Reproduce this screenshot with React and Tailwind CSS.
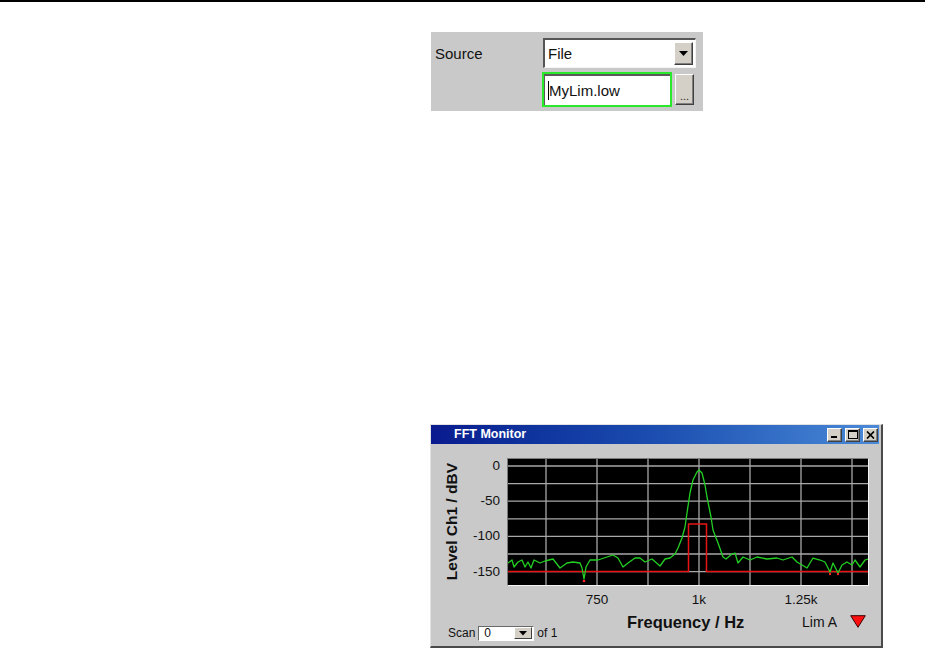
import React from "react";

const font = { fontFamily: '"Liberation Sans", Arial, sans-serif' };

const noise = [
  [508, 563], [512, 560], [514, 567], [518, 562], [522, 560], [525, 567], [528, 562], [531, 568], [534, 560],
  [540, 563], [545, 561], [553, 559], [560, 568], [567, 563], [573, 562], [580, 563], [582, 568], [584, 579],
  [586, 567], [590, 560], [598, 560], [607, 557], [613, 555], [618, 558], [623, 567], [628, 563], [635, 558],
  [640, 558], [645, 562], [652, 559], [660, 566], [665, 559], [670, 558], [675, 554], [678, 548], [682, 538],
  [685, 527], [687, 513], [690, 493], [693, 480], [697, 472], [699, 470], [702, 473], [705, 485], [707, 497],
  [711, 517], [713, 530], [718, 543], [723, 557], [726, 559], [732, 554], [735, 553], [738, 563], [743, 557],
  [750, 560], [757, 557], [767, 559], [777, 558], [783, 560], [792, 557], [797, 562], [802, 565], [807, 568],
  [813, 558], [820, 560], [825, 562], [830, 572], [833, 563], [838, 573], [842, 565], [847, 562], [852, 565],
  [855, 560], [860, 567], [865, 560], [868, 559],
];

const vLines = [546, 597, 648, 699, 750, 801, 852];
const hLines = [466, 483.6, 501.2, 518.8, 536.4, 554, 571.6];

function Plot() {
  return (
    <div className="w-[362px] h-[128px] border-t border-l border-[#7c7c7c] border-b border-r border-b-[#f4f4f4] border-r-[#f4f4f4] bg-black">
      <svg width="360" height="126" viewBox="508 459 360 126" className="block">
        {vLines.map((x) => (
          <line key={"v" + x} x1={x} x2={x} y1={459} y2={585} stroke="#a8a8a8" strokeWidth="1.3" />
        ))}
        {hLines.map((y) => (
          <line key={"h" + y} x1={508} x2={868} y1={y} y2={y} stroke="#a8a8a8" strokeWidth="1.3" />
        ))}
        <polyline
          points="508,571.6 688.5,571.6 688.5,524 706.5,524 706.5,571.6 868,571.6"
          fill="none"
          stroke="#e81414"
          strokeWidth="1.5"
        />
        <polyline
          points={noise.map((p) => p.join(",")).join(" ")}
          fill="none"
          stroke="#22d022"
          strokeWidth="1.3"
          strokeLinejoin="round"
        />
        <circle cx="584" cy="581" r="1.3" fill="#ff2020" />
        <circle cx="830" cy="574" r="1.2" fill="#ff2020" />
        <circle cx="838" cy="574" r="1.2" fill="#ff2020" />
      </svg>
    </div>
  );
}

function TitleButton({ children }) {
  return (
    <div className="w-[15px] h-[14px] bg-[#d4d0c8] border-t border-l border-white border-b border-r border-b-[#404040] border-r-[#404040] shadow-[inset_-1px_-1px_0_#808080] flex items-center justify-center">
      {children}
    </div>
  );
}

function FFTWindow() {
  return (
    <div
      className="ml-[430px] mt-[313px] w-[453px] h-[224px] bg-[#c9c9c9] border-t border-l border-[#e2e2e2] border-r-2 border-b-2 border-r-[#4a4a4a] border-b-[#4a4a4a] flex flex-col"
      style={font}
    >
      <div className="h-[19px] mr-[2px] bg-gradient-to-r from-[#0a1a8e] via-[#1c4db0] to-[#4a8ad8] flex items-center">
        <span className="pl-[23px] text-white font-bold text-[12.5px] leading-none">FFT Monitor</span>
        <div className="ml-auto flex items-center gap-[3px] pr-[1px]">
          <TitleButton>
            <svg width="9" height="9" viewBox="0 0 9 9">
              <rect x="1" y="6" width="6" height="2" fill="#000" />
            </svg>
          </TitleButton>
          <TitleButton>
            <svg width="10" height="9" viewBox="0 0 10 9">
              <rect x="0.5" y="0.5" width="9" height="8" fill="none" stroke="#000" strokeWidth="1" />
              <rect x="0" y="0" width="10" height="2" fill="#000" />
            </svg>
          </TitleButton>
          <TitleButton>
            <svg width="9" height="8" viewBox="0 0 9 8">
              <path d="M1 0.5 L8 7.5 M8 0.5 L1 7.5" stroke="#000" strokeWidth="1.7" />
            </svg>
          </TitleButton>
        </div>
      </div>

      <div className="pt-[14px] flex flex-col">
        <div className="flex h-[128px]">
          <div className="w-[42px] flex items-center justify-center">
            <span className="[writing-mode:vertical-rl] rotate-180 font-bold text-[15.5px] leading-none text-[#111] whitespace-nowrap">
              Level Ch1 / dBV
            </span>
          </div>
          <div className="w-[27px] flex flex-col items-end gap-[19.2px] text-[13.5px] leading-[16px] text-[#111]">
            <span>0</span>
            <span>-50</span>
            <span>-100</span>
            <span>-150</span>
          </div>
          <div className="w-[7px]" />
          <Plot />
        </div>

        <div className="mt-[6px] h-[16px] ml-[136px] flex gap-[42px] text-[13.5px] leading-[16px] text-[#111]">
          <span className="w-[60px] text-center">750</span>
          <span className="w-[60px] text-center">1k</span>
          <span className="w-[60px] text-center">1.25k</span>
        </div>

        <div className="mt-[4px] flex items-start text-[#111]">
          <div className="ml-[17px] w-[179px] mt-[13px] h-[16px] flex items-center">
            <span className="text-[12px] leading-none">Scan</span>
            <div className="ml-[3px] w-[56px] h-[15px] bg-white border-t border-l border-[#6a6a6a] border-b border-r border-b-white border-r-white flex items-center">
              <span className="pl-[5px] text-[12px] leading-none">0</span>
              <div className="ml-auto mr-[1px] w-[18px] h-[12px] bg-[#d4d0c8] border-t border-l border-white border-b border-r border-b-[#404040] border-r-[#404040] flex items-center justify-center">
                <svg width="8" height="5" viewBox="0 0 8 5">
                  <path d="M0 0 H8 L4 4.5 Z" fill="#000" />
                </svg>
              </div>
            </div>
            <span className="ml-[3px] text-[12px] leading-none">of 1</span>
          </div>
          <span className="w-[118px] font-bold text-[16.5px] leading-[20px] whitespace-nowrap">Frequency / Hz</span>
          <span className="ml-[57px] w-[36px] text-[14px] leading-[20px] whitespace-nowrap">Lim A</span>
          <svg className="ml-[12px] mt-[3px]" width="16" height="13" viewBox="0 0 16 13">
            <path d="M0.7 0.7 H15.3 L8 12.3 Z" fill="#ff1010" stroke="#3a0000" strokeWidth="1" />
          </svg>
        </div>
      </div>
    </div>
  );
}

function SourcePanel() {
  return (
    <div className="ml-[431px] mt-[30px] w-[272px] h-[79px] bg-[#c9c9c9] pt-[6px] flex flex-col" style={font}>
      <div className="flex h-[30px] items-center">
        <span className="w-[112px] pl-[4px] text-[15px] leading-none text-[#111]">Source</span>
        <div className="w-[153px] h-[30px] bg-white border-t-2 border-l-2 border-[#555] border-b border-r border-b-[#f4f4f4] border-r-[#f4f4f4] flex items-center">
          <span className="pl-[3px] text-[15px] leading-none text-[#111]">File</span>
          <div className="ml-auto mr-[2px] w-[19px] h-[23px] bg-[#d4d0c8] border-t border-l border-white border-b border-r border-b-[#404040] border-r-[#404040] shadow-[inset_-1px_-1px_0_#808080] flex items-center justify-center">
            <svg width="9" height="5" viewBox="0 0 9 5">
              <path d="M0 0 H9 L4.5 5 Z" fill="#000" />
            </svg>
          </div>
        </div>
      </div>
      <div className="mt-[4px] flex items-center">
        <div className="ml-[111px] w-[130px] h-[35px] border-2 border-[#2ae82a] bg-white">
          <div className="w-full h-full border-t-2 border-l border-[#5a5a5a] flex items-center">
            <span className="ml-[3px] w-[1px] h-[19px] bg-black" />
            <span className="text-[15px] leading-none text-[#111]">MyLim.low</span>
          </div>
        </div>
        <div className="ml-[3px] w-[19px] h-[31px] bg-[#d4d0c8] border-t border-l border-white border-b border-r border-b-[#404040] border-r-[#404040] shadow-[inset_-1px_-1px_0_#808080] flex items-end justify-center">
          <span className="text-[11px] leading-[16px] text-[#222]">...</span>
        </div>
      </div>
    </div>
  );
}

export default function App() {
  return (
    <div className="w-[925px] h-[651px] bg-white overflow-hidden flex flex-col">
      <div className="h-[2px] w-full bg-black" />
      <SourcePanel />
      <FFTWindow />
    </div>
  );
}
